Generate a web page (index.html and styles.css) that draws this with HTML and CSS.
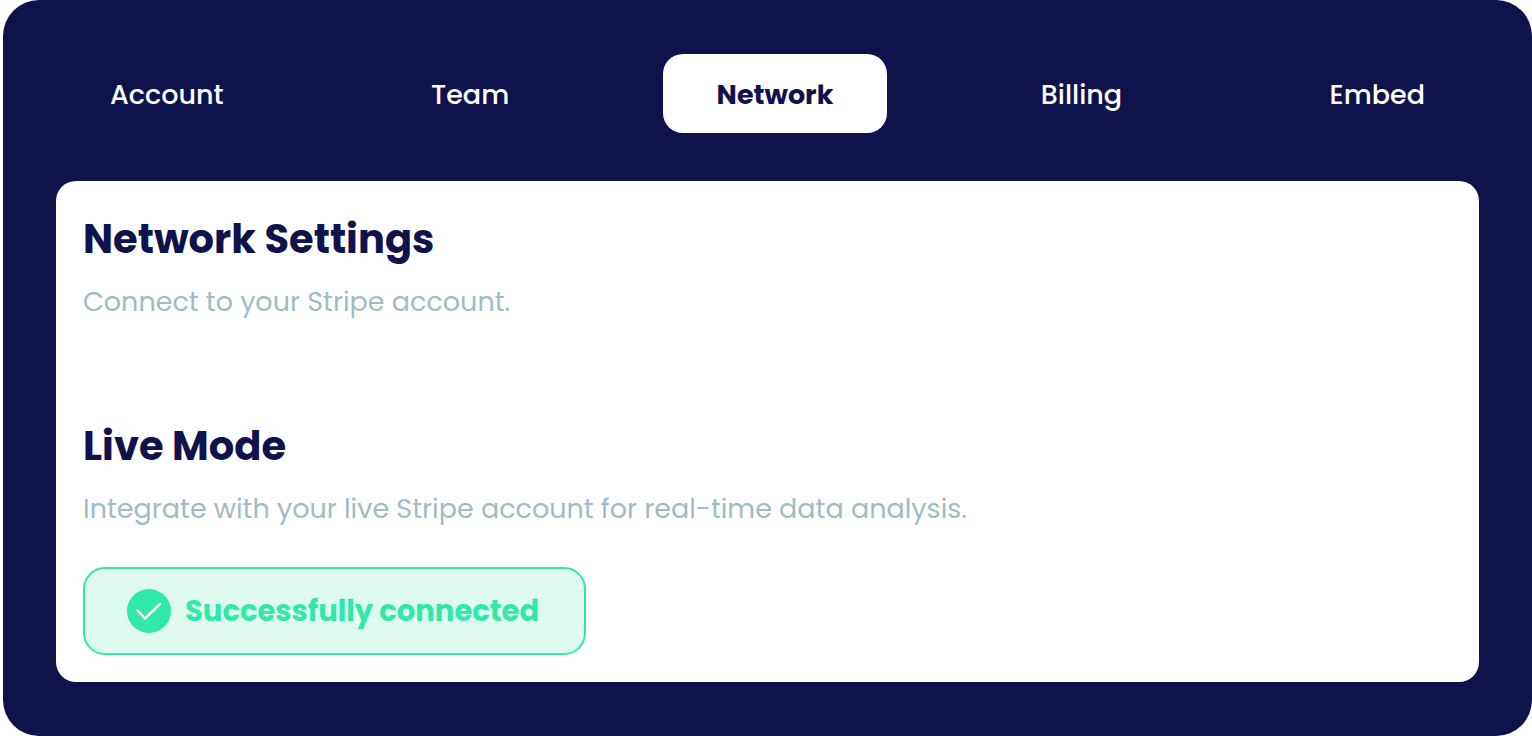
FILE: index.html
```html
<!DOCTYPE html>
<html lang="en">
<head>
    <meta charset="UTF-8">
    <meta name="viewport" content="width=device-width, initial-scale=1.0">
    <title>Network Settings</title>
    <link rel="stylesheet" href="styles.css">
</head>
<body>
    <div class="settings">
        <nav class="tabs">
            <a href="#account">Account</a>
            <a href="#team">Team</a>
            <a href="#network" class="active" aria-current="page">Network</a>
            <a href="#billing">Billing</a>
            <a href="#embed">Embed</a>
        </nav>

        <main class="card">
            <section>
                <h1>Network Settings</h1>
                <p>Connect to your Stripe account.</p>
            </section>

            <section>
                <h2>Live Mode</h2>
                <p>Integrate with your live Stripe account for real-time data analysis.</p>
                <div class="status" role="status">
                    <svg viewBox="0 0 44 44" aria-hidden="true">
                        <circle cx="22" cy="22" r="22" />
                        <path d="M10.5 21.5 L18 29.5 L33 15" />
                    </svg>
                    <span>Successfully connected</span>
                </div>
            </section>
        </main>
    </div>
</body>
</html>
```
FILE: styles.css
```css
body {
    font-family: Poppins, Inter, "Open Sans", sans-serif;
    margin: 0;
    background-color: #fff;
    color: #10124c;
}
.settings {
    box-sizing: border-box;
    min-height: 100vh;
    margin-left: 3px;
    padding: 54px 53px;
    background-color: #10124c;
    border-radius: 36px;
}
.tabs {
    display: flex;
    justify-content: space-between;
    margin-bottom: 48px;
}
.tabs a {
    padding: 21px 54px 19px;
    border-radius: 20px;
    color: #fff;
    font-size: 27px;
    font-weight: 500;
    line-height: 39px;
    text-decoration: none;
}
.tabs .active {
    background-color: #fff;
    color: #10124c;
    font-weight: bold;
}
.card {
    padding: 28px 27px 27px;
    background-color: #fff;
    border-radius: 20px;
}
section + section {
    margin-top: 94px;
}
h1,
h2 {
    margin: 0;
    font-size: 40px;
    line-height: 60px;
}
p {
    margin: 13px 0 0;
    color: #a0bbc4;
    font-size: 27px;
    line-height: 40px;
}
.status {
    box-sizing: border-box;
    display: inline-flex;
    align-items: center;
    gap: 14px;
    height: 88px;
    margin-top: 38px;
    padding: 0 45px 0 42px;
    background-color: #dffbf1;
    border: 2px solid #30e8a8;
    border-radius: 22px;
    color: #30e8a8;
    font-size: 29px;
    font-weight: bold;
}
.status svg {
    width: 44px;
    height: 44px;
    fill: #30e8a8;
}
.status path {
    fill: none;
    stroke: #fff;
    stroke-width: 2.5;
    stroke-linecap: round;
}
```
